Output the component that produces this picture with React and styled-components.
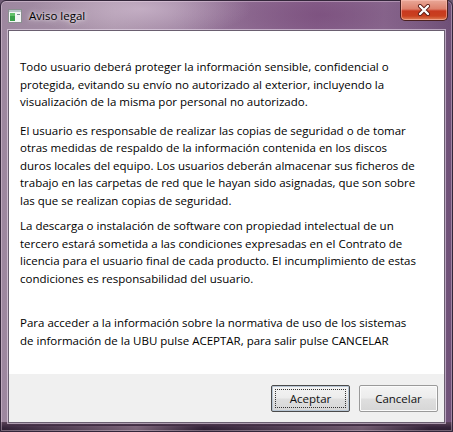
import React from 'react';
import styled, { createGlobalStyle } from 'styled-components';

const GlobalStyle = createGlobalStyle`
  html, body { margin: 0; padding: 0; background: #6e5a74; }
  #root { width: 453px; height: 432px; }
`;

const Window = styled.div`
  box-sizing: border-box;
  width: 453px;
  height: 432px;
  display: flex;
  flex-direction: column;
  padding: 0 7px 8px 7px;
  border: 1px solid #33263a;
  border-radius: 6px 6px 0 0;
  background:
    linear-gradient(90deg, rgba(255, 230, 245, 0) 0%, rgba(255, 220, 240, 0.35) 30%, rgba(255, 230, 245, 0) 45%, rgba(255, 220, 240, 0.3) 80%, rgba(255, 230, 245, 0) 95%) bottom / 100% 5px no-repeat,
    linear-gradient(180deg, #5a4258 0%, #35243a 60%, #2a1c2e 100%) bottom / 100% 9px no-repeat,
    radial-gradient(ellipse 110px 30px at 140px 8px, rgba(215, 195, 215, 0.6), transparent),
    radial-gradient(ellipse 150px 40px at 320px 14px, rgba(110, 60, 110, 0.45), transparent),
    linear-gradient(90deg, #9d879f 0%, #a993a9 25%, #96779a 50%, #8b6690 70%, #8e7094 85%, #6e5077 100%);
  box-shadow: inset 0 0 0 1px rgba(255, 235, 250, 0.35);
  font-family: 'Open Sans', 'Noto Sans', sans-serif;
`;

const TitleBar = styled.div`
  height: 29px;
  display: flex;
  align-items: flex-start;
  flex-shrink: 0;
`;

const TitleIcon = styled.svg`
  width: 14px;
  height: 14px;
  margin: 8px 0 0 0;
  flex-shrink: 0;
`;

const TitleText = styled.span`
  margin: 7px 0 0 7px;
  font-size: 11.5px;
  line-height: 16px;
  color: #000;
  text-shadow: 0 0 6px rgba(255, 255, 255, 0.85), 0 0 3px rgba(255, 255, 255, 0.7);
`;

const CloseButton = styled.div`
  margin: -1px -3px 0 auto;
  width: 48px;
  height: 21px;
  box-sizing: border-box;
  border: 1px solid #4a2020;
  border-top: none;
  border-radius: 0 0 5px 5px;
  background: linear-gradient(180deg, #e9a898 0%, #dd806c 45%, #c8391f 55%, #c9401f 80%, #df8158 100%);
  box-shadow: inset 0 0 0 1px rgba(255, 200, 190, 0.5);
  display: flex;
  align-items: center;
  justify-content: center;
`;

const Client = styled.div`
  flex: 1;
  display: flex;
  flex-direction: column;
  border: 1px solid #6a5f70;
  box-shadow: 0 0 0 1px rgba(235, 222, 238, 0.6);
  background: #fff;
  min-height: 0;
`;

const Content = styled.div`
  flex: 1;
  padding: 27px 0 0 11px;
  font-size: 11.5px;
  line-height: 17.5px;
  color: #000;
`;

const Para = styled.p`
  margin: 0 0 ${(p) => p.$gap}px 0;
`;

const Line = styled.span`
  display: block;
  white-space: nowrap;
`;

const ButtonBar = styled.div`
  height: 48px;
  flex-shrink: 0;
  background: #f0f0f0;
  display: flex;
  align-items: center;
  justify-content: flex-end;
  gap: 9px;
  padding: 0 6px 0 0;
`;

const Button = styled.div`
  box-sizing: border-box;
  width: 79px;
  height: 27px;
  border: 1px solid ${(p) => (p.$default ? '#4a4a4a' : '#9a9a9a')};
  border-radius: 2px;
  background: linear-gradient(180deg, #f4f4f4 0%, #ececec 48%, #dfdfdf 52%, #d6d6d6 100%);
  box-shadow: inset 0 0 0 1px ${(p) => (p.$default ? '#b8c6d4' : '#fbfbfb')};
  display: flex;
  align-items: center;
  justify-content: center;
  padding: 3px;
  font-size: 11.5px;
  color: #111;
`;

const FocusRing = styled.span`
  flex: 1;
  align-self: stretch;
  display: flex;
  align-items: center;
  justify-content: center;
  border: 1px dotted ${(p) => (p.$show ? '#333' : 'transparent')};
`;

const paragraphs = [
  {
    gap: 11,
    lines: [
      'Todo usuario deberá proteger la información sensible, confidencial o',
      'protegida, evitando su envío no autorizado al exterior, incluyendo la',
      'visualización de la misma por personal no autorizado.',
    ],
  },
  {
    gap: 8,
    lines: [
      'El usuario es responsable de realizar las copias de seguridad o de tomar',
      'otras medidas de respaldo de la información contenida en los discos',
      'duros locales del equipo. Los usuarios deberán almacenar sus ficheros de',
      'trabajo en las carpetas de red que le hayan sido asignadas, que son sobre',
      'las que se realizan copias de seguridad.',
    ],
  },
  {
    gap: 27,
    lines: [
      'La descarga o instalación de software con propiedad intelectual de un',
      'tercero estará sometida a las condiciones expresadas en el Contrato de',
      'licencia para el usuario final de cada producto. El incumplimiento de estas',
      'condiciones es responsabilidad del usuario.',
    ],
  },
  {
    gap: 0,
    lines: [
      'Para acceder a la información sobre la normativa de uso de los sistemas',
      'de información de la UBU pulse ACEPTAR, para salir pulse CANCELAR',
    ],
  },
];

export default function App() {
  return (
    <>
      <GlobalStyle />
      <Window>
        <TitleBar>
          <TitleIcon viewBox="0 0 14 14">
            <rect x="0.5" y="0.5" width="13" height="13" fill="#f4f6f6" stroke="#8a9090" />
            <rect x="1" y="1" width="12" height="2" fill="#b9c4c8" />
            <rect x="2" y="4" width="5" height="8" fill="#3aa04a" />
            <rect x="2" y="4" width="5" height="3" fill="#63c06a" />
            <rect x="9" y="5" width="3" height="1" fill="#7a8a90" />
          </TitleIcon>
          <TitleText>Aviso legal</TitleText>
          <CloseButton>
            <svg width="14" height="12" viewBox="0 0 14 12">
              <path d="M3 2 L11 10 M11 2 L3 10" stroke="#5a1a14" strokeWidth="4" strokeLinecap="round" />
              <path d="M3 2 L11 10 M11 2 L3 10" stroke="#fff" strokeWidth="2.4" strokeLinecap="round" />
            </svg>
          </CloseButton>
        </TitleBar>
        <Client>
          <Content>
            {paragraphs.map((p, i) => (
              <Para key={i} $gap={p.gap}>
                {p.lines.map((l) => (
                  <Line key={l}>{l}</Line>
                ))}
              </Para>
            ))}
          </Content>
          <ButtonBar>
            <Button $default>
              <FocusRing $show>Aceptar</FocusRing>
            </Button>
            <Button>
              <FocusRing>Cancelar</FocusRing>
            </Button>
          </ButtonBar>
        </Client>
      </Window>
    </>
  );
}
